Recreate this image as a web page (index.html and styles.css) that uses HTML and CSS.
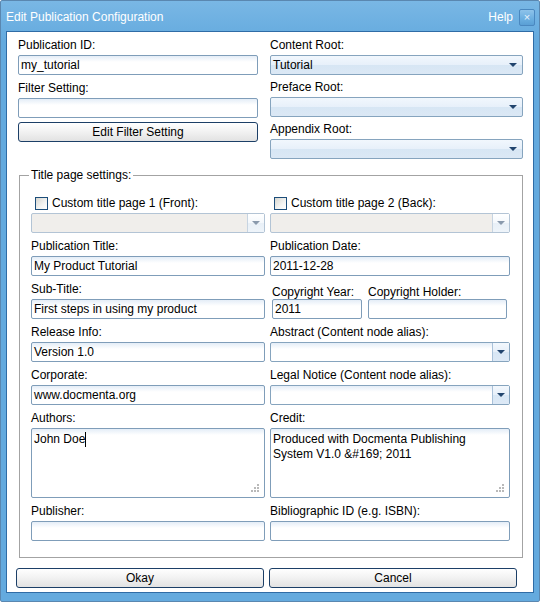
FILE: index.html
```html
<!DOCTYPE html>
<html>
<head>
<meta charset="utf-8">
<link rel="stylesheet" href="styles.css">
</head>
<body>
<div class="win">
  <div class="titlebar">
    <span class="title">Edit Publication Configuration</span>
    <span class="help">Help</span>
    <span class="close">&#215;</span>
  </div>
  <div class="panel">
    <div class="top">
      <div class="col">
        <div class="field">
          <div class="lbl">Publication ID:</div>
          <div class="inp">my_tutorial</div>
        </div>
        <div class="field">
          <div class="lbl">Filter Setting:</div>
          <div class="inp"></div>
        </div>
        <div class="btn btn-filter">Edit Filter Setting</div>
      </div>
      <div class="col col-right">
        <div class="field">
          <div class="lbl">Content Root:</div>
          <div class="sel">Tutorial<span class="arr"></span></div>
        </div>
        <div class="field">
          <div class="lbl">Preface Root:</div>
          <div class="sel"><span class="arr"></span></div>
        </div>
        <div class="field">
          <div class="lbl">Appendix Root:</div>
          <div class="sel"><span class="arr"></span></div>
        </div>
      </div>
    </div>

    <fieldset class="tps">
      <legend>Title page settings:</legend>
      <div class="grid">
        <div class="cell">
          <div class="chkrow chk-left"><span class="chk"></span>Custom title page 1 (Front):</div>
          <div class="combo disabled"><span class="cbtn"><span class="arr"></span></span></div>
        </div>
        <div class="cell">
          <div class="chkrow chk-right"><span class="chk"></span>Custom title page 2 (Back):</div>
          <div class="combo disabled"><span class="cbtn"><span class="arr"></span></span></div>
        </div>

        <div class="cell">
          <div class="lbl">Publication Title:</div>
          <div class="inp">My Product Tutorial</div>
        </div>
        <div class="cell">
          <div class="lbl">Publication Date:</div>
          <div class="inp">2011-12-28</div>
        </div>

        <div class="cell">
          <div class="lbl">Sub-Title:</div>
          <div class="inp">First steps in using my product</div>
        </div>
        <div class="cell copy">
          <div class="cy">
            <div class="lbl">Copyright Year:</div>
            <div class="inp">2011</div>
          </div>
          <div class="ch">
            <div class="lbl">Copyright Holder:</div>
            <div class="inp"></div>
          </div>
        </div>

        <div class="cell">
          <div class="lbl">Release Info:</div>
          <div class="inp">Version 1.0</div>
        </div>
        <div class="cell">
          <div class="lbl">Abstract (Content node alias):</div>
          <div class="combo"><span class="cbtn"><span class="arr"></span></span></div>
        </div>

        <div class="cell">
          <div class="lbl">Corporate:</div>
          <div class="inp">www.docmenta.org</div>
        </div>
        <div class="cell">
          <div class="lbl">Legal Notice (Content node alias):</div>
          <div class="combo"><span class="cbtn"><span class="arr"></span></span></div>
        </div>

        <div class="cell">
          <div class="lbl">Authors:</div>
          <div class="area">John Doe<span class="caret"></span>
            <svg class="grip" width="10" height="10" viewBox="0 0 10 10"><g fill="#b9b9b9"><rect x="7" y="1" width="2" height="2"/><rect x="4" y="4" width="2" height="2"/><rect x="7" y="4" width="2" height="2"/><rect x="1" y="7" width="2" height="2"/><rect x="4" y="7" width="2" height="2"/><rect x="7" y="7" width="2" height="2"/></g></svg>
          </div>
        </div>
        <div class="cell">
          <div class="lbl">Credit:</div>
          <div class="area">Produced with Docmenta Publishing<br>System V1.0 &amp;#169; 2011
            <svg class="grip" width="10" height="10" viewBox="0 0 10 10"><g fill="#b9b9b9"><rect x="7" y="1" width="2" height="2"/><rect x="4" y="4" width="2" height="2"/><rect x="7" y="4" width="2" height="2"/><rect x="1" y="7" width="2" height="2"/><rect x="4" y="7" width="2" height="2"/><rect x="7" y="7" width="2" height="2"/></g></svg>
          </div>
        </div>

        <div class="cell">
          <div class="lbl">Publisher:</div>
          <div class="inp"></div>
        </div>
        <div class="cell">
          <div class="lbl">Bibliographic ID (e.g. ISBN):</div>
          <div class="inp"></div>
        </div>
      </div>
    </fieldset>

    <div class="actions">
      <div class="btn">Okay</div>
      <div class="btn">Cancel</div>
    </div>
  </div>
</div>
</body>
</html>
```

FILE: styles.css
```css
* { box-sizing: border-box; }
html, body { margin: 0; padding: 0; background: #ffffff; }
body {
  font-family: "Liberation Sans", Arial, sans-serif;
  font-size: 12px;
  color: #000;
}
.win {
  width: 540px;
  height: 602px;
  border: 1px solid #5a87b0;
  border-radius: 2px;
  background: linear-gradient(#79b7e5, #64aade 40px, #64aade);
  padding: 0 5px 8px 5px;
  display: flex;
  flex-direction: column;
}
.titlebar {
  height: 30px;
  display: flex;
  align-items: center;
  color: #ffffff;
  font-size: 12px;
  padding-left: 0;
}
.title { flex: 1; padding-top: 2px; }
.help { margin-right: 6px; padding-top: 1px; }
.close {
  width: 16px;
  height: 17px;
  border: 1px solid #4a88c0;
  border-radius: 2px;
  background: linear-gradient(#8ec3ea, #6aaee0 60%, #5a9fd5);
  color: #e8f3fc;
  font-size: 11px;
  line-height: 14px;
  text-align: center;
  margin-right: -1px;
  margin-top: 2px;
}
.panel {
  flex: 1;
  background: #ffffff;
  border: 1px solid #2f6ca6;
  padding: 6px 0 0 0;
  display: flex;
  flex-direction: column;
}
.top {
  display: grid;
  grid-template-columns: 240px 253px;
  column-gap: 12px;
  padding-left: 11px;
}
.lbl {
  height: 14px;
  line-height: 14px;
  margin-bottom: 3px;
  white-space: nowrap;
}
.field { margin-bottom: 6px; }
.col-right .field { margin-bottom: 5px; }
.inp {
  height: 20px;
  border: 1px solid #7f9db9;
  border-radius: 2px;
  background: linear-gradient(#e4edf7, #ffffff 6px);
  padding: 0 2px;
  line-height: 18px;
  white-space: nowrap;
  overflow: hidden;
}
.sel {
  position: relative;
  height: 20px;
  border: 1px solid #86a4be;
  border-radius: 2px;
  background: linear-gradient(#f1f7fd, #e7f0fa 50%, #d7e6f4 52%, #dbe8f5);
  padding: 0 2px;
  line-height: 18px;
}
.arr {
  position: absolute;
  right: 5px;
  top: 7px;
  width: 0;
  height: 0;
  border-left: 4px solid transparent;
  border-right: 4px solid transparent;
  border-top: 4px solid #22456e;
}
.btn {
  height: 20px;
  border: 1px solid #1c3f67;
  border-radius: 3px;
  background: linear-gradient(#ffffff, #f3f3f3 45%, #e2e2e2);
  text-align: center;
  line-height: 18px;
}
.btn-filter { margin-top: -2px; }

.tps {
  margin: 4px 10px 0 12px;
  padding: 14px 12px 16px 11px;
  border: 1px solid #a3a3a3;
  border-radius: 0;
}
.tps legend {
  padding: 0 2px;
  margin-left: -2px;
  line-height: 14px;
}
.grid {
  display: grid;
  grid-template-columns: 234px 240px;
  column-gap: 5px;
  row-gap: 6px;
}
.chkrow {
  height: 14px;
  line-height: 14px;
  margin-bottom: 3px;
  display: flex;
  align-items: center;
  white-space: nowrap;
}
.chk-left { padding-left: 4px; }
.chk-right { padding-left: 4px; }
.chk {
  width: 13px;
  height: 13px;
  border: 1px solid #1c4d7a;
  background: linear-gradient(135deg, #d6d6d0, #f4f4f2 60%, #ffffff);
  margin-right: 4px;
  flex: none;
}
.combo {
  position: relative;
  height: 20px;
  border: 1px solid #86a4be;
  border-radius: 2px;
  background: linear-gradient(#e4edf7, #ffffff 6px);
}
.combo .cbtn {
  position: absolute;
  right: 0;
  top: 0;
  bottom: 0;
  width: 17px;
  border-left: 1px solid #a9c1d9;
  background: linear-gradient(#f3f8fd, #e6eff9 50%, #d8e7f5 52%, #dde9f6);
}
.combo .arr { right: 4px; }
.combo.disabled {
  background: #f0eeeb;
  border-color: #b3c4d5;
}
.combo.disabled .cbtn {
  border-left-color: #c7d4e1;
  background: linear-gradient(#ffffff, #f4f8fc 50%, #e9f0f7 52%, #eef4fa);
}
.combo.disabled .arr { border-top-color: #8a9aad; }

.copy {
  display: flex;
  gap: 6px;
  padding-left: 2px;
}
.copy .lbl { margin-top: 3px; margin-bottom: 0; }
.cy { width: 90px; }
.ch { width: 139px; }

.area {
  position: relative;
  height: 70px;
  border: 1px solid #7f9db9;
  border-radius: 2px;
  background: linear-gradient(#e4edf7, #ffffff 6px);
  padding: 3px 2px;
  line-height: 15px;
}
.caret {
  display: inline-block;
  width: 1px;
  height: 15px;
  background: #000;
  vertical-align: top;
}
.grip {
  position: absolute;
  right: 4px;
  bottom: 4px;
}

.actions {
  display: flex;
  gap: 5px;
  padding: 10px 0 0 9px;
}
.actions .btn { width: 248px; }
```
